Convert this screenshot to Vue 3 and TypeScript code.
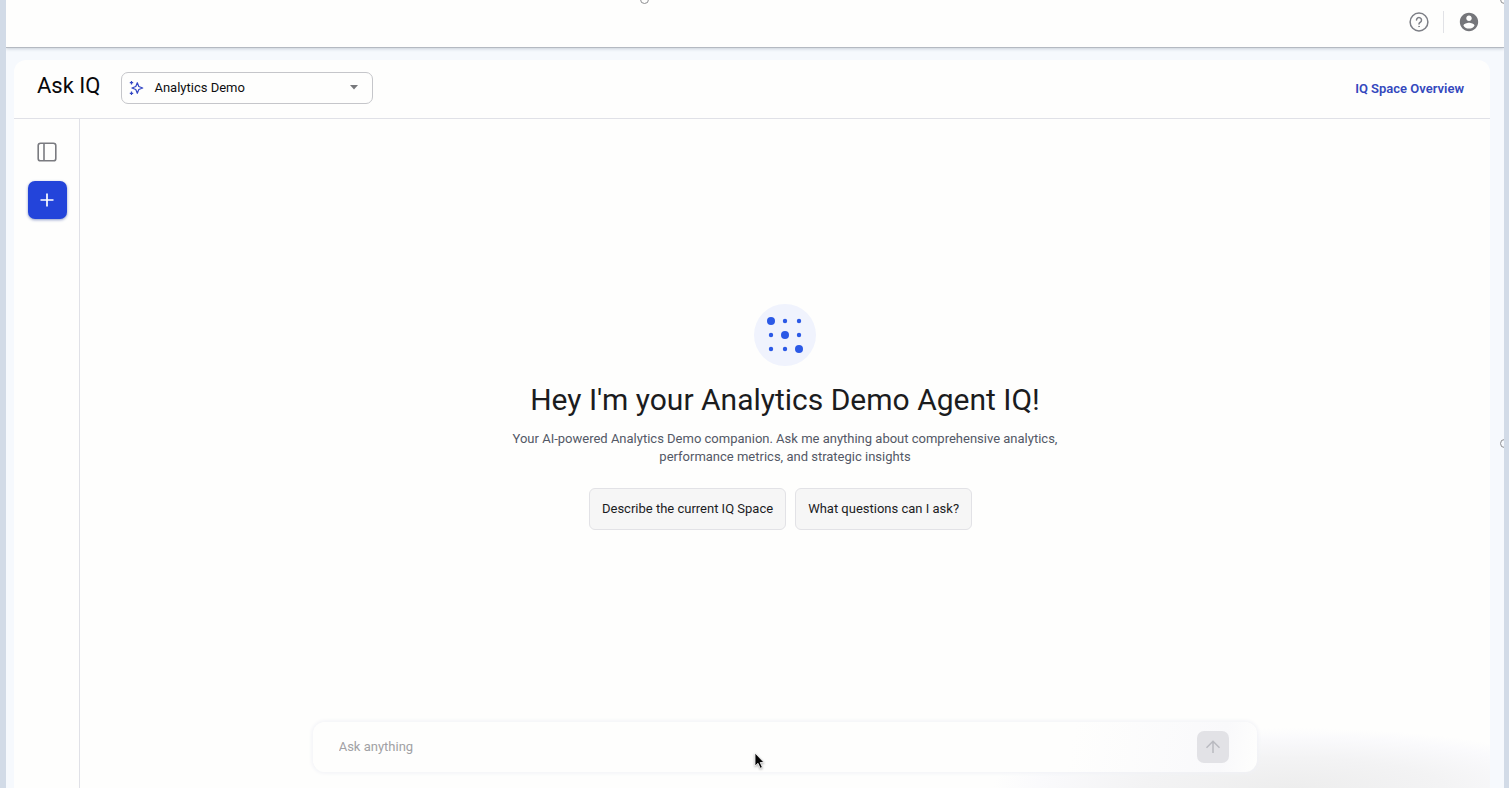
<script setup lang="ts">
import { ref } from 'vue'

interface Dot {
  x: number
  y: number
  r: number
}

const space = ref('Analytics Demo')
const question = ref('')
const prompts: string[] = ['Describe the current IQ Space', 'What questions can I ask?']

const dots: Dot[] = [0, 1, 2].flatMap((row) =>
  [0, 1, 2].map((col) => ({ x: 17 + col * 14, y: 17 + row * 14, r: row === col ? 4 : 2.2 })),
)
</script>

<template>
  <div class="frame">
    <span class="handle handle-top"></span>
    <span class="handle handle-corner"></span>
    <span class="handle handle-side"></span>

    <header class="topbar">
      <button class="icon-button" type="button" aria-label="Help">
        <svg width="20" height="20" viewBox="0 0 20 20" fill="none" stroke="#7d7f86" stroke-width="1.5" stroke-linecap="round">
          <circle cx="10" cy="10" r="8.9" />
          <path d="M7.5 8.100a2.500 2.500 0 1 1 4 2c-.9.700-1.500 1-1.500 1.900" />
          <circle cx="10" cy="14.500" r=".4" fill="#7d7f86" stroke-width=".7" />
        </svg>
      </button>
      <span class="separator"></span>
      <button class="icon-button" type="button" aria-label="Account">
        <svg width="22" height="22" viewBox="0 0 24 24" fill="#75767a">
          <path d="M12 2C6.48 2 2 6.48 2 12s4.48 10 10 10 10-4.48 10-10S17.52 2 12 2zm0 3c1.66 0 3 1.34 3 3s-1.34 3-3 3-3-1.34-3-3 1.34-3 3-3zm0 14.200c-2.500 0-4.710-1.280-6-3.220.03-1.990 4-3.080 6-3.080 1.990 0 5.970 1.090 6 3.080-1.290 1.940-3.500 3.220-6 3.220z" />
        </svg>
      </button>
    </header>

    <div class="card">
      <div class="card-header">
        <h1>Ask IQ</h1>
        <label class="space-picker">
          <svg width="16" height="16" viewBox="0 0 16 16" fill="none" stroke="#3346c4" stroke-width="1.2" stroke-linejoin="round">
            <path d="M8.300 2.700l1.500 3.800 3.900 1.500-3.900 1.500-1.500 3.800-1.500-3.800L2.900 8l3.900-1.500z" />
            <path d="M2.500 1v3.400M.8 2.700h3.400M2.500 11.600V15M.8 13.300h3.400" />
          </svg>
          <select v-model="space" aria-label="IQ Space">
            <option>Analytics Demo</option>
          </select>
          <svg width="8" height="5" viewBox="0 0 8 5" fill="#77787b"><path d="M0 0h8L4 4.500z" /></svg>
        </label>
        <a class="overview" href="#">IQ Space Overview</a>
      </div>

      <div class="card-body">
        <aside class="rail">
          <button class="icon-button" type="button" aria-label="Toggle sidebar">
            <svg width="20" height="20" viewBox="0 0 20 20" fill="none" stroke="#7a7b80" stroke-width="1.6">
              <rect x="1.200" y="1.200" width="17.600" height="17.600" rx="2.400" />
              <path d="M7 1v18" />
            </svg>
          </button>
          <button class="new-chat" type="button" aria-label="New chat">
            <svg width="14" height="14" viewBox="0 0 14 14" fill="none" stroke="#fff" stroke-width="1.700"><path d="M7 .500v13M.500 7h13" /></svg>
          </button>
        </aside>

        <main class="main">
          <section class="hero">
            <svg width="62" height="62" viewBox="0 0 62 62">
              <circle cx="31" cy="31" r="31" fill="#f0f3fd" />
              <circle v-for="(dot, i) in dots" :key="i" :cx="dot.x" :cy="dot.y" :r="dot.r" fill="#2b59e6" />
            </svg>
            <h2>Hey I'm your Analytics Demo Agent IQ!</h2>
            <p>Your AI-powered Analytics Demo companion. Ask me anything about comprehensive analytics, performance metrics, and strategic insights</p>
            <div class="prompts">
              <button v-for="prompt in prompts" :key="prompt" type="button" @click="question = prompt">{{ prompt }}</button>
            </div>
          </section>
          <form class="composer" @submit.prevent>
            <input v-model="question" type="text" placeholder="Ask anything" aria-label="Ask anything" />
            <button type="submit" aria-label="Send">
              <svg width="16" height="16" viewBox="0 0 16 16" fill="none" stroke="#b9bac0" stroke-width="1.500"><path d="M8 14V2.500M1.500 8.800L8 2.300l6.500 6.500" /></svg>
            </button>
          </form>
        </main>
      </div>
    </div>

    <svg class="pointer" width="12" height="18" viewBox="0 0 12 18">
      <path d="M1 1v13l3-2.700 2.200 5 2.200-1-2.200-4.800H10z" fill="#050505" stroke="#fff" stroke-width=".800" />
    </svg>
  </div>
</template>

<style>
body {
  margin: 0;
  background: #d2dbe7;
}
</style>

<style scoped>
* {
  box-sizing: border-box;
}

button,
input,
select {
  font: inherit;
  color: inherit;
  border: 0;
  padding: 0;
  background: none;
}

button {
  cursor: pointer;
}

svg {
  display: block;
  flex: none;
}

.frame {
  position: relative;
  display: flex;
  flex-direction: column;
  min-height: 100vh;
  margin: 0 5px 0 6px;
  overflow: hidden;
  background: #f6f9fd;
  font-family: Roboto, sans-serif;
  font-size: 13px;
  line-height: 18px;
  color: #1b1c1e;
}

.handle {
  position: absolute;
  z-index: 2;
  width: 9px;
  height: 9px;
  border: 1px solid #8d8e91;
  border-radius: 50%;
}

.handle-top {
  top: -5px;
  left: 634px;
}

.handle-corner {
  top: -5px;
  right: -5px;
}

.handle-side {
  top: 439px;
  right: -5px;
}

.topbar {
  display: flex;
  align-items: center;
  justify-content: flex-end;
  gap: 14px;
  height: 48px;
  padding: 0 24px 4px 0;
  border-bottom: 1px solid #b4b9c1;
  box-shadow: 0 1px 3px #c9d0d9;
  background: #fefefd;
}

.icon-button {
  display: flex;
}

.separator {
  width: 1px;
  height: 22px;
  background: #e1e2e6;
}

.card {
  display: flex;
  flex: 1;
  flex-direction: column;
  margin: 12px 14px 0 8px;
  border-radius: 12px 12px 0 0;
  background: #fefefd;
}

.card-header {
  display: flex;
  align-items: center;
  height: 59px;
  padding: 0 26px 3px 23px;
  border-bottom: 1px solid #e0e1e7;
}

h1,
h2,
p {
  margin: 0;
  font-weight: 400;
}

h1 {
  padding-bottom: 4px;
  font-size: 22px;
  line-height: 28px;
  color: #08080a;
}

.space-picker {
  display: flex;
  align-items: center;
  width: 252px;
  height: 32px;
  margin-left: 21px;
  padding: 0 14px 0 7px;
  border: 1px solid #c5c6ca;
  border-radius: 7px;
  color: #0e0e10;
}

.space-picker select {
  flex: 1;
  height: 30px;
  margin-left: 9px;
  appearance: none;
  outline: none;
}

.overview {
  margin-left: auto;
  padding-top: 2px;
  font-weight: 600;
  color: #3448bd;
  text-decoration: none;
}

.card-body {
  display: flex;
  flex: 1;
}

.rail {
  display: flex;
  flex-direction: column;
  align-items: center;
  gap: 19px;
  width: 66px;
  padding: 23px 0 0 1px;
  border-right: 1px solid #e0e1e7;
}

.new-chat {
  display: flex;
  align-items: center;
  justify-content: center;
  width: 39px;
  height: 38px;
  border-radius: 7px;
  background: #2344da;
  box-shadow: 0 1px 3px #8f9cc8;
}

.main {
  display: flex;
  flex: 1;
  flex-direction: column;
  align-items: center;
  padding-bottom: 16px;
  background: radial-gradient(ellipse 300px 60px at 86% 100%, #ededed 0%, #f3f3f4 50%, #fafafc 85%, #fefefd 100%);
}

.hero {
  display: flex;
  flex: 1;
  flex-direction: column;
  align-items: center;
  justify-content: center;
  padding-bottom: 7px;
  text-align: center;
}

h2 {
  margin-top: 14px;
  font-size: 30px;
  line-height: 40px;
}

.hero p {
  max-width: 560px;
  margin-top: 10px;
  color: #535866;
}

.prompts {
  display: flex;
  gap: 9px;
  margin: 22px 9px 0 0;
}

.prompts button {
  height: 42px;
  padding: 0 12px;
  border: 1px solid #e2e2e6;
  border-radius: 6px;
  background: #f6f6f6;
}

.composer {
  display: flex;
  align-items: center;
  width: 67%;
  height: 50px;
  padding: 0 28px 0 26px;
  border-radius: 12px;
  background: linear-gradient(100deg, #fefefd 80%, #f9f9fb 96%, #fefefd 100%);
  box-shadow: 0 0 4px 1px #f0f1f6;
}

.composer input {
  flex: 1;
  min-width: 0;
  outline: none;
}

.composer input::placeholder {
  color: #a1a1a4;
  opacity: 1;
}

.composer button {
  display: flex;
  align-items: center;
  justify-content: center;
  width: 32px;
  height: 32px;
  border-radius: 7px;
  background: #e2e2e6;
}

.pointer {
  position: absolute;
  top: 752px;
  left: 748px;
  filter: drop-shadow(0 1px 1px #aaaaaa);
}
</style>
